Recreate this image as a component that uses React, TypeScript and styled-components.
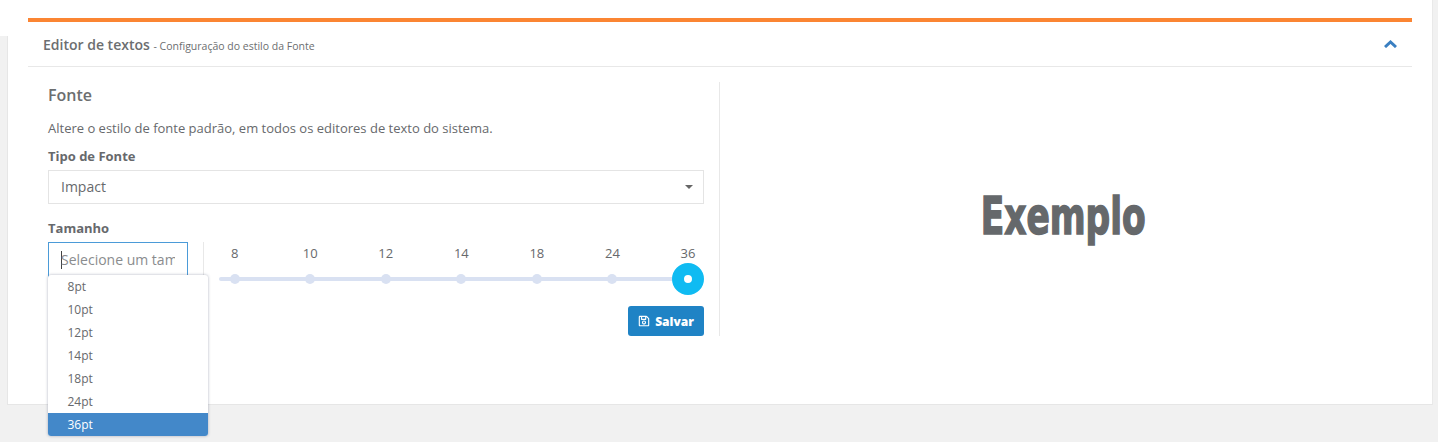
import React from "react";
import styled, { createGlobalStyle } from "styled-components";
import { FaRegSave } from "react-icons/fa";

const GlobalStyle = createGlobalStyle`
  html, body {
    margin: 0;
    padding: 0;
  }
  body {
    font-family: "Open Sans", "Liberation Sans", sans-serif;
    color: #67696c;
  }
`;

const Page = styled.div`
  box-sizing: border-box;
  height: 442px;
  overflow: hidden;
  padding: 0 5px 0 7px;
  background: linear-gradient(#fff, #fff) 0 0 / 7px 36px no-repeat, #f1f1f1;
`;

const Card = styled.div`
  box-sizing: border-box;
  height: 405px;
  padding: 18px 20px 0 21px;
  background: linear-gradient(#fff 36px, #e6e6e6 36px) 0 0 / 1px 100% no-repeat, #fff;
  border-bottom: 1px solid #e6e6e6;
  border-right: 1px solid #e9e9e9;
`;

const Panel = styled.section`
  border-top: 4px solid #fb8533;
`;

const PanelHeader = styled.header`
  box-sizing: border-box;
  height: 45px;
  display: flex;
  align-items: center;
  justify-content: space-between;
  padding: 0 15px;
  border-bottom: 1px solid #e8e8e8;
`;

const PanelTitle = styled.h3`
  margin: 0;
  font-size: 14px;
  font-weight: 600;
  color: #6c6e70;
  small {
    font-size: 10.5px;
    font-weight: 400;
  }
`;

const Collapse = styled.svg`
  display: block;
  width: 13px;
  height: 8px;
  fill: none;
  stroke: #3a7fc1;
  stroke-width: 3;
`;

const PanelBody = styled.div`
  display: flex;
  padding-top: 15px;
`;

const FormColumn = styled.div`
  position: relative;
  box-sizing: border-box;
  width: 692px;
  height: 254px;
  padding: 0 15px 0 20px;
  border-right: 1px solid #e8e8e8;
`;

const Heading = styled.h4`
  margin: 0 0 12px;
  font-size: 16px;
  line-height: 26px;
  font-weight: 600;
  color: #6c6e70;
`;

const Hint = styled.p`
  margin: 0 0 11px;
  font-size: 13px;
  line-height: 17px;
`;

const FieldLabel = styled.label`
  display: block;
  font-size: 13px;
  line-height: 17px;
  font-weight: 700;
  margin-bottom: 5px;
`;

const SelectBox = styled.div`
  box-sizing: border-box;
  height: 34px;
  display: flex;
  align-items: center;
  justify-content: space-between;
  padding: 0 12px 1px;
  margin-bottom: 16px;
  border: 1px solid #e4e4e4;
  font-size: 14px;
`;

const Caret = styled.span`
  width: 0;
  height: 0;
  margin-right: -2px;
  border-left: 4px solid transparent;
  border-right: 4px solid transparent;
  border-top: 4px solid #666;
`;

const SizeRow = styled.div`
  display: flex;
`;

const SizeInput = styled.div`
  box-sizing: border-box;
  flex: none;
  width: 140px;
  height: 36px;
  padding: 8px 12px;
  border: 1px solid #4b9bd8;
  font-size: 14px;
  line-height: 18px;
  color: #8a8c8e;
`;

const Placeholder = styled.div`
  overflow: hidden;
  white-space: nowrap;
`;

const TextCursor = styled.span`
  display: inline-block;
  width: 1px;
  height: 18px;
  margin-right: -1px;
  vertical-align: top;
  background: #444;
`;

const SliderArea = styled.div`
  flex: 1;
  margin-left: 15px;
  padding-left: 14.7px;
  border-left: 1px solid #e8e8e8;
`;

const Slider = styled.div`
  position: relative;
  display: flex;
  justify-content: space-between;
  &::before {
    content: "";
    position: absolute;
    left: 0;
    right: 4px;
    top: 35px;
    height: 4px;
    border-radius: 2px;
    background: #d9e1f2;
  }
`;

const Stop = styled.div`
  position: relative;
  width: 32px;
  display: flex;
  flex-direction: column;
  align-items: center;
  font-size: 13px;
  line-height: 22px;
`;

const Knob = styled.span<{ $active?: boolean }>`
  box-sizing: border-box;
  display: block;
  width: ${(p) => (p.$active ? "32px" : "10px")};
  height: ${(p) => (p.$active ? "32px" : "10px")};
  margin-top: ${(p) => (p.$active ? "-1px" : "10px")};
  border-radius: 50%;
  background: ${(p) => (p.$active ? "#fff" : "#d9e1f2")};
  border: ${(p) => (p.$active ? "12px solid #0fbbf2" : "none")};
`;

const Actions = styled.div`
  display: flex;
  justify-content: flex-end;
  margin-top: 11px;
`;

const SaveButton = styled.button`
  box-sizing: border-box;
  width: 76px;
  height: 30px;
  display: flex;
  align-items: center;
  justify-content: center;
  gap: 5px;
  padding: 0;
  border: none;
  border-radius: 3px;
  background: #1f83c5;
  color: #fff;
  font-family: inherit;
  font-size: 12px;
  font-weight: 800;
`;

const Menu = styled.ul`
  position: absolute;
  left: 20px;
  top: 193px;
  width: 160px;
  margin: 0;
  padding: 0;
  list-style: none;
  overflow: hidden;
  background: #fff;
  border-radius: 3px;
  box-shadow: 0 0 3px rgba(70, 80, 110, 0.45);
`;

const MenuItem = styled.li<{ $selected?: boolean }>`
  height: 23px;
  padding-left: 19.5px;
  font-size: 12px;
  line-height: 23px;
  color: ${(p) => (p.$selected ? "#fff" : "#67696c")};
  background: ${(p) => (p.$selected ? "#4388c9" : "transparent")};
`;

const Preview = styled.div`
  flex: 1;
  display: flex;
  align-items: center;
  justify-content: center;
  padding: 0 6px 0 0;
  height: 268px;
`;

const PreviewText = styled.span`
  display: inline-block;
  font-family: "DejaVu Sans Condensed", "DejaVu Sans", sans-serif;
  font-size: 52px;
  font-weight: 700;
  line-height: 60px;
  color: #65686b;
  -webkit-text-stroke: 1.5px #65686b;
  transform: scaleX(0.735);
`;

const stops = [8, 10, 12, 14, 18, 24, 36];

export default function App() {
  return (
    <Page>
      <GlobalStyle />
      <Card>
        <Panel>
          <PanelHeader>
            <PanelTitle>
              Editor de textos <small>- Configuração do estilo da Fonte</small>
            </PanelTitle>
            <Collapse viewBox="0 0 13 8">
              <polyline points="1,7 6.5,2 12,7" />
            </Collapse>
          </PanelHeader>
          <PanelBody>
            <FormColumn>
              <Heading>Fonte</Heading>
              <Hint>Altere o estilo de fonte padrão, em todos os editores de texto do sistema.</Hint>
              <FieldLabel>Tipo de Fonte</FieldLabel>
              <SelectBox>
                Impact
                <Caret />
              </SelectBox>
              <FieldLabel>Tamanho</FieldLabel>
              <SizeRow>
                <SizeInput>
                  <Placeholder>
                    <TextCursor />
                    Selecione um tam
                  </Placeholder>
                </SizeInput>
                <SliderArea>
                  <Slider>
                    {stops.map((size) => (
                      <Stop key={size}>
                        {size}
                        <Knob $active={size === 36} />
                      </Stop>
                    ))}
                  </Slider>
                  <Actions>
                    <SaveButton>
                      <FaRegSave size={12} />
                      Salvar
                    </SaveButton>
                  </Actions>
                </SliderArea>
              </SizeRow>
              <Menu>
                {stops.map((size) => (
                  <MenuItem key={size} $selected={size === 36}>
                    {size}pt
                  </MenuItem>
                ))}
              </Menu>
            </FormColumn>
            <Preview>
              <PreviewText>Exemplo</PreviewText>
            </Preview>
          </PanelBody>
        </Panel>
      </Card>
    </Page>
  );
}
